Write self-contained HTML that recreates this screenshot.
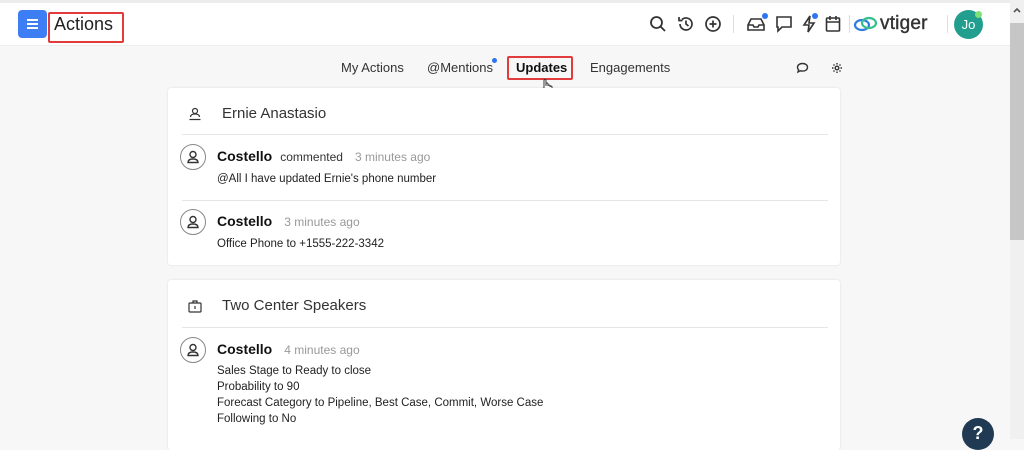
<!DOCTYPE html>
<html><head><meta charset="utf-8"><style>
*{box-sizing:border-box;margin:0;padding:0}
body{width:1024px;height:439px;overflow:hidden;background:#f7f7f7;font-family:"Liberation Sans",sans-serif;color:#222;position:relative}
.top{position:absolute;left:0;top:3px;width:1010px;height:43px;background:#fff;border-bottom:1px solid #eee}
.strip{position:absolute;left:0;top:0;width:1010px;height:3px;background:#ececec}
.menu{position:absolute;left:18px;top:10px;width:29px;height:28px;background:#3d7ef5;border-radius:4px}
.menu i{position:absolute;left:9px;width:11px;height:2px;background:#fff}
.redbox{position:absolute;border:2px solid #e23b3b;border-radius:2px}
.title{position:absolute;left:54px;top:14px;font-size:18px;color:#222}
.ic{position:absolute}
.sb{position:absolute;left:1010px;top:0;width:14px;height:439px;background:#f0f0f0}
.thumb{position:absolute;left:1010px;top:23px;width:14px;height:217px;background:#c6c6c6}
.tabs{position:absolute;top:60px;font-size:13px;color:#333}
.card{position:absolute;left:168px;width:672px;background:#fff;border-radius:3px;box-shadow:0 0 2px rgba(0,0,0,.12)}
.hd{position:absolute;left:54px;font-size:15px;color:#333}
.hr{position:absolute;left:14px;right:12px;height:1px;background:#e6e6e6}
.av{position:absolute;left:12px;width:26px;height:26px;border:1px solid #888;border-radius:50%}
.nm{position:absolute;left:49px;font-size:14px;font-weight:bold;color:#111}
.tm{color:#999;font-weight:normal;font-size:12px;margin-left:12px}
.cm{color:#333;font-weight:normal;font-size:12px;margin-left:8px}
.tx{position:absolute;left:49px;font-size:11.5px;color:#222;line-height:16px}
</style></head><body>
<div class="strip"></div>
<div class="top"></div>
<div class="menu"><i style="top:9px"></i><i style="top:13px"></i><i style="top:17px"></i></div>
<div class="redbox" style="left:48px;top:12px;width:76px;height:31px"></div>
<div class="title">Actions</div>

<svg class="ic" style="left:649px;top:15px" width="18" height="18" viewBox="0 0 18 18" fill="none" stroke="#333" stroke-width="1.8"><circle cx="7.5" cy="7.5" r="5.5"/><path d="M11.5 11.5L16 16"/></svg>
<svg class="ic" style="left:677px;top:15px" width="18" height="18" viewBox="0 0 18 18" fill="none" stroke="#333" stroke-width="1.7"><path d="M3 9a6 6 0 1 0 2-4.5M2 2v3.5h3.5M9 5.5V9l2.5 2"/></svg>
<svg class="ic" style="left:704px;top:15px" width="18" height="18" viewBox="0 0 18 18" fill="none" stroke="#333" stroke-width="1.7"><circle cx="9" cy="9" r="7"/><path d="M9 5.5v7M5.5 9h7"/></svg>
<div class="ic" style="left:733px;top:15px;width:1px;height:18px;background:#ddd"></div>
<svg class="ic" style="left:746px;top:15px" width="20" height="18" viewBox="0 0 20 18" fill="none" stroke="#333" stroke-width="1.6"><path d="M2 10l3-6h10l3 6v5H2z M2 10h5l1 2h4l1-2h5"/></svg>
<div class="ic" style="left:762px;top:13px;width:6px;height:6px;border-radius:50%;background:#2f74f0"></div>
<svg class="ic" style="left:775px;top:15px" width="18" height="18" viewBox="0 0 18 18" fill="none" stroke="#333" stroke-width="1.6"><path d="M2 2h14v10H7l-4 4v-4H2z"/></svg>
<svg class="ic" style="left:801px;top:15px" width="16" height="18" viewBox="0 0 16 18" fill="none" stroke="#333" stroke-width="1.6"><path d="M9 1L3 10h5l-1 7 6-9H8z"/></svg>
<div class="ic" style="left:812px;top:13px;width:6px;height:6px;border-radius:50%;background:#2f74f0"></div>
<svg class="ic" style="left:825px;top:15px" width="16" height="18" viewBox="0 0 16 18" fill="none" stroke="#333" stroke-width="1.6"><rect x="1.5" y="3" width="13" height="13" rx="1"/><path d="M1.5 7h13M5 1v4M11 1v4"/></svg>
<div class="ic" style="left:849px;top:15px;width:1px;height:18px;background:#ddd"></div>
<svg class="ic" style="left:853px;top:15px" width="26" height="18" viewBox="0 0 26 18" fill="none" stroke-width="2.2"><ellipse cx="9" cy="10" rx="7" ry="5" stroke="#2f7de1"/><ellipse cx="16" cy="8" rx="7" ry="5" stroke="#35c08d"/></svg>
<div class="ic" style="left:880px;top:13px;font-size:19px;color:#333;letter-spacing:.2px;-webkit-text-stroke:.4px #333">vtiger</div>
<div class="ic" style="left:947px;top:15px;width:1px;height:18px;background:#ddd"></div>
<div class="ic" style="left:954px;top:10px;width:29px;height:29px;border-radius:50%;background:#229e8e;color:#fff;font-size:13px;text-align:center;line-height:29px">Jo</div>
<div class="ic" style="left:975px;top:11px;width:7px;height:7px;border-radius:50%;background:#7fe07a"></div>

<div class="tabs" style="left:341px">My Actions</div>
<div class="tabs" style="left:427px">@Mentions</div>
<div class="ic" style="left:492px;top:58px;width:5px;height:5px;border-radius:50%;background:#2f74f0"></div>
<div class="redbox" style="left:507px;top:56px;width:66px;height:24px"></div>
<div class="tabs" style="left:516px;font-weight:bold;color:#111">Updates</div>
<div class="tabs" style="left:590px">Engagements</div>
<svg class="ic" style="left:540px;top:78px" width="14" height="18" viewBox="0 0 14 18" fill="#fff" stroke="#333" stroke-width="1"><path d="M4 11V2.5a1 1 0 0 1 2 0V8V6a1 1 0 0 1 2 0v2a1 1 0 0 1 2 0v1a1 1 0 0 1 2 0v4l-2 4H5L2 12a1 1 0 0 1 2-1z"/></svg>
<svg class="ic" style="left:796px;top:62px" width="13" height="12" viewBox="0 0 13 12" fill="none" stroke="#333" stroke-width="1.4"><path d="M6.5 1.5c3 0 5 1.6 5 3.8s-2 3.8-5 3.8c-.7 0-1.3 0-2-.3L2 10l.6-2.2C1.8 7.1 1.5 6.2 1.5 5.3c0-2.2 2-3.8 5-3.8z"/></svg>
<svg class="ic" style="left:831px;top:62px" width="12" height="12" viewBox="0 0 12 12" fill="none" stroke="#333" stroke-width="1.4"><circle cx="6" cy="6" r="1.8"/><path d="M6 1v1.5M6 9.5V11M1 6h1.5M9.5 6H11M2.5 2.5l1 1M8.5 8.5l1 1M2.5 9.5l1-1M8.5 3.5l1-1"/></svg>

<div class="card" style="top:88px;height:177px">
  <svg class="ic" style="left:20px;top:19px" width="14" height="14" viewBox="0 0 14 14" fill="none" stroke="#333" stroke-width="1.2"><circle cx="7" cy="4" r="2.5"/><path d="M2.5 10c0-2 2-3 4.5-3s4.5 1 4.5 3M1.5 12.5h11"/></svg>
  <div class="hd" style="top:17px">Ernie Anastasio</div>
  <div class="hr" style="top:46px"></div>
  <div class="av" style="top:56px"><svg width="24" height="24" viewBox="0 0 24 24" fill="none" stroke="#333" stroke-width="1.4"><circle cx="12" cy="9.5" r="3"/><path d="M7 17.5c0-2.5 2.2-3.5 5-3.5s5 1 5 3.5z"/></svg></div>
  <div class="nm" style="top:60px">Costello<span class="cm">commented</span><span class="tm">3 minutes ago</span></div>
  <div class="tx" style="top:83px">@All I have updated Ernie's phone number</div>
  <div class="hr" style="top:112px"></div>
  <div class="av" style="top:121px"><svg width="24" height="24" viewBox="0 0 24 24" fill="none" stroke="#333" stroke-width="1.4"><circle cx="12" cy="9.5" r="3"/><path d="M7 17.5c0-2.5 2.2-3.5 5-3.5s5 1 5 3.5z"/></svg></div>
  <div class="nm" style="top:125px">Costello<span class="tm">3 minutes ago</span></div>
  <div class="tx" style="top:148px">Office Phone to +1555-222-3342</div>
</div>

<div class="card" style="top:280px;height:170px">
  <svg class="ic" style="left:20px;top:20px" width="14" height="13" viewBox="0 0 14 13" fill="none" stroke="#333" stroke-width="1.2"><rect x="1" y="3" width="12" height="9" rx="1"/><path d="M5 3V1h4v2M7 6v3"/></svg>
  <div class="hd" style="top:17px">Two Center Speakers</div>
  <div class="hr" style="top:47px"></div>
  <div class="av" style="top:57px"><svg width="24" height="24" viewBox="0 0 24 24" fill="none" stroke="#333" stroke-width="1.4"><circle cx="12" cy="9.5" r="3"/><path d="M7 17.5c0-2.5 2.2-3.5 5-3.5s5 1 5 3.5z"/></svg></div>
  <div class="nm" style="top:61px">Costello<span class="tm">4 minutes ago</span></div>
  <div class="tx" style="top:83px">Sales Stage to Ready to close<br>Probability to 90<br>Forecast Category to Pipeline, Best Case, Commit, Worse Case<br>Following to No</div>
</div>

<div class="ic" style="left:962px;top:418px;width:32px;height:32px;border-radius:50%;background:#1f3a52;color:#fff;font-size:18px;font-weight:bold;text-align:center;line-height:30px">?</div>
<div class="sb"></div>
<div class="thumb"></div>
<svg class="ic" style="left:1012px;top:6px" width="10" height="8" viewBox="0 0 10 8" fill="none" stroke="#555" stroke-width="1.6"><path d="M2 6l3-3 3 3"/></svg>
</body></html>
